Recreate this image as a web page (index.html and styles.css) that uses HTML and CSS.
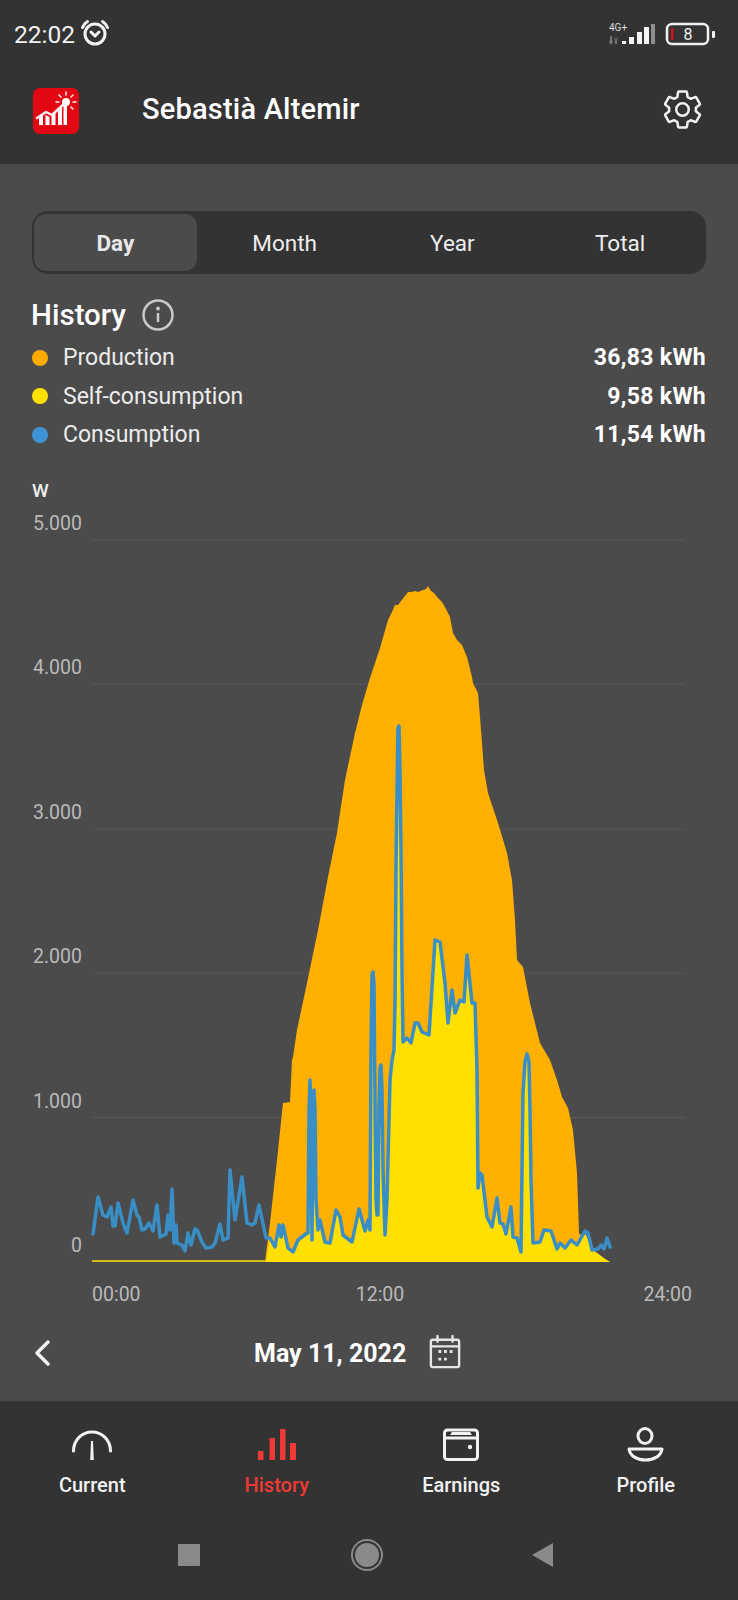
FILE: index.html
```html
<!DOCTYPE html>
<html>
  <head>
    <meta charset="utf-8">
    <title>History</title>
    <link rel="stylesheet" href="styles.css">
  </head>
  <body>
    <div class="phone">
      <header class="top">
        <div class="status">
          <span class="clock">22:02</span>
          <svg class="alarm" width="30" height="30" viewBox="0 0 30 30">
            <circle class="line" cx="15" cy="16" r="10"/>
            <path class="line" d="M11 14l4 4 4-4M2.500 9.500C3.500 7 5 5 7.500 3.500M27.500 9.500C26.500 7 25 5 22.500 3.500"/>
          </svg>
          <svg class="signal" width="122" height="30" viewBox="0 0 122 30">
            <text class="net" x="2" y="9">4G+</text>
            <path class="arrows" d="M3 14h2v8H3zM1.500 19h5L4 23zM8 14h2v8H8zM6.500 17h5L9 13z"/>
            <rect class="bar" x="15" y="19" width="4" height="3"/>
            <rect class="bar" x="22" y="15" width="5" height="7"/>
            <rect class="bar" x="30" y="10" width="5" height="12"/>
            <rect class="bar" x="37" y="5" width="5" height="17"/>
            <rect class="bar dim" x="44" y="2" width="4" height="20"/>
            <rect class="line thin" x="60" y="2" width="41" height="20" rx="5"/>
            <rect class="low" x="64" y="6" width="2.500" height="12"/>
            <text class="charge" x="81" y="17.500">8</text>
            <rect class="bar" x="105" y="9" width="3" height="7" rx="1"/>
          </svg>
        </div>
        <div class="appbar">
          <svg class="logo" width="46" height="46" viewBox="0 0 46 46">
            <rect class="logo-bg" width="46" height="46" rx="7"/>
            <path class="logo-bars" d="M6 37V30l4-3v10zM12.500 37V27l4 2v8zM18.500 37V28l4-3v12zM25 37V23l4-4v18zM30.500 37V17l3.500-1v21z"/>
            <path class="line thin" d="M4 30l9-6 6 3 13-12"/>
            <circle class="sun" cx="33" cy="14" r="4"/>
            <path class="line rays" d="M33 4v3M33 21v2M23 14h3M40 14h3M26 7l2 2M40 7l-2 2M40 21l-2-2"/>
          </svg>
          <h2 class="name">Sebastià Altemir</h2>
          <svg class="gear" width="43" height="43" viewBox="0 0 24 24">
            <path class="line gear-line" d="M19.430 12.980c.04-.32.07-.64.07-.98 0-.34-.03-.66-.07-.98l2.110-1.650c.19-.15.24-.42.12-.64l-2-3.460c-.09-.16-.26-.25-.44-.25-.06 0-.12.01-.17.03l-2.490 1c-.52-.4-1.080-.73-1.690-.98l-.38-2.650C14.460 2.180 14.250 2 14 2h-4c-.25 0-.46.18-.49.42l-.38 2.650c-.61.25-1.170.59-1.690.98l-2.490-1c-.06-.02-.12-.03-.18-.03-.17 0-.34.09-.43.25l-2 3.460c-.13.22-.07.49.12.64l2.110 1.650c-.04.32-.07.65-.07.98 0 .33.03.66.07.98l-2.110 1.650c-.19.15-.24.42-.12.64l2 3.460c.09.16.26.25.44.25.06 0 .12-.01.17-.03l2.490-1c.52.4 1.080.73 1.690.98l.38 2.650c.03.24.24.42.49.42h4c.25 0 .46-.18.49-.42l.38-2.650c.61-.25 1.170-.59 1.690-.98l2.490 1c.06.02.12.03.18.03.17 0 .34-.09.43-.25l2-3.460c.12-.22.07-.49-.12-.64l-2.110-1.650z"/>
            <circle class="line gear-line" cx="12" cy="12" r="3.500"/>
          </svg>
        </div>
      </header>

      <main class="content">
        <div class="tabs">
          <div class="tab active">Day</div>
          <div class="tab">Month</div>
          <div class="tab">Year</div>
          <div class="tab">Total</div>
        </div>

        <div class="heading">
          <h1>History</h1>
          <svg class="info" width="34" height="34" viewBox="0 0 34 34">
            <circle class="info-line" cx="17" cy="17" r="14.500"/>
            <path class="info-line" d="M17 15v9"/>
            <circle class="info-dot" cx="17" cy="10.500" r="2"/>
          </svg>
        </div>

        <div class="legend">
          <div class="row"><i class="dot orange"></i><span class="label">Production</span><b>36,83 kWh</b></div>
          <div class="row"><i class="dot yellow"></i><span class="label">Self-consumption</span><b>9,58 kWh</b></div>
          <div class="row"><i class="dot blue"></i><span class="label">Consumption</span><b>11,54 kWh</b></div>
        </div>

        <svg class="chart" width="738" height="866" viewBox="0 454 738 866">
          <text class="unit" x="32" y="497">W</text>
          <text class="tick" x="33" y="530">5.000</text>
          <text class="tick" x="33" y="674">4.000</text>
          <text class="tick" x="33" y="819">3.000</text>
          <text class="tick" x="33" y="963">2.000</text>
          <text class="tick" x="33" y="1108">1.000</text>
          <text class="tick" x="71" y="1252">0</text>

          <path class="grid" d="M92 540H685M92 684H685M92 829H685M92 973H685M92 1117.500H685"/>

          <polygon class="production" points="265,1262 270,1223 277,1160 283,1103 290,1102 292,1060 293,1057 297,1030 307,983 318,930 328,877 337,833 345,780 355,733 362,705 370,678 380,648 388,620 392,612 395,605 398,605 401,601 405,596 408,592 411,592 415,591 418,592 423,590 426,589 428,586 431,591 434,593 438,598 442,602 446,609 450,617 453,633 457,640 462,645 467,657 472,677 473,683 478,693 480,717 482,743 484,770 488,793 498,823 507,853 512,880 515,920 517,960 523,967 530,1003 540,1043 550,1060 557,1080 562,1097 568,1108 573,1130 577,1173 579,1233 585,1240 593,1250 605,1259 610,1262"/>

          <polygon class="self" points="266,1262 270,1238 275,1247 279,1225 281,1237 283,1225 288,1248 293,1252 298,1240 307,1233 308,1233 309,1110 310,1080 311,1110 312,1240 313,1120 314,1090 315,1110 316,1200 318,1230 320,1220 325,1242 330,1243 336,1210 340,1217 343,1235 352,1242 359,1209 365,1231 368,1220 370,1230 371,1050 372,975 373,972 374,985 375,1100 376,1200 377,1215 378,1215 379,1110 380,1068 381,1065 382,1090 383,1170 385,1235 387,1200 390,1080 392,1060 394,1050 395,1003 396,870 397,790 398,728 399,726 400,770 401,850 402,970 403,1042 407,1038 411,1043 415,1023 418,1023 422,1032 429,1035 435,940 440,942 445,983 448,1023 452,990 455,1013 460,1000 464,1002 467,955 472,1003 475,1003 477,1070 478,1188 480,1173 482,1175 487,1217 492,1227 497,1198 500,1223 503,1224 506,1234 511,1207 513,1237 517,1238 521,1252 522,1170 523,1093 525,1062 527,1054 529,1062 530,1110 531,1180 533,1243 540,1242 544,1230 551,1231 557,1249 560,1243 565,1248 571,1240 577,1245 585,1233 593,1250 605,1259 610,1262"/>

          <path class="zero" d="M92 1261H266"/>

          <polyline class="usage" points="93,1234 98,1197 103,1215 107,1217 111,1207 113,1226 115,1226 118,1203 123,1223 127,1233 133,1200 137,1215 139,1217 142,1230 145,1229 149,1223 153,1231 157,1205 160,1237 166,1234 168,1215 170,1230 172,1189 174,1243 176,1225 177,1243 182,1245 185,1251 188,1233 191,1245 195,1229 197,1230 202,1242 206,1248 212,1247 215,1243 220,1224 223,1240 228,1238 230,1170 235,1220 242,1177 247,1223 252,1225 255,1223 259,1205 266,1238 270,1238 275,1247 279,1225 281,1237 283,1225 288,1248 293,1252 298,1240 307,1233 308,1233 309,1110 310,1080 311,1110 312,1240 313,1120 314,1090 315,1110 316,1200 318,1230 320,1220 325,1242 330,1243 336,1210 340,1217 343,1235 352,1242 359,1209 365,1231 368,1220 370,1230 371,1050 372,975 373,972 374,985 375,1100 376,1200 377,1215 378,1215 379,1110 380,1068 381,1065 382,1090 383,1170 385,1235 387,1200 390,1080 392,1060 394,1050 395,1003 396,870 397,790 398,728 399,726 400,770 401,850 402,970 403,1042 407,1038 411,1043 415,1023 418,1023 422,1032 429,1035 435,940 440,942 445,983 448,1023 452,990 455,1013 460,1000 464,1002 467,955 472,1003 475,1003 477,1070 478,1188 480,1173 482,1175 487,1217 492,1227 497,1198 500,1223 503,1224 506,1234 511,1207 513,1237 517,1238 521,1252 522,1170 523,1093 525,1062 527,1054 529,1062 530,1110 531,1180 533,1243 540,1242 544,1230 551,1231 557,1249 560,1243 565,1248 571,1240 577,1245 585,1231 588,1233 592,1250 598,1249 601,1245 604,1249 607,1238 610,1247"/>

          <text class="tick" x="92" y="1301">00:00</text>
          <text class="tick mid" x="380" y="1301">12:00</text>
          <text class="tick end" x="692" y="1301">24:00</text>
        </svg>

        <div class="datebar">
          <svg class="back" width="20" height="28" viewBox="0 0 20 28">
            <path class="line back-line" d="M16 3L5 14l11 11"/>
          </svg>
          <span class="date">May 11, 2022</span>
          <svg class="calendar" width="32" height="34" viewBox="0 0 34 36">
            <rect class="line cal-line" x="2" y="5" width="30" height="29" rx="2"/>
            <path class="line cal-line" d="M2 12h30M9 1v6M25 1v6"/>
            <path class="cal-dots" d="M10 16h3v3h-3zM16 16h3v3h-3zM22 16h3v3h-3zM10 24h3v3h-3zM16 24h3v3h-3z"/>
          </svg>
        </div>
      </main>

      <footer class="bottom">
        <nav class="nav">
          <a class="nav-item">
            <svg width="44" height="36" viewBox="0 0 44 36">
              <path class="line" d="M3.500 24C3.500 13 12 5 22 5s18.500 8 18.500 19"/>
              <path class="needle" d="M21 14h2l.8 19h-3.600z"/>
            </svg>
            <span>Current</span>
          </a>
          <a class="nav-item current">
            <svg width="44" height="36" viewBox="0 0 44 36">
              <path class="hist-bars" d="M3 24h5.500v9H3zM14.500 11H20v22h-5.500zM25 2h5.500v31H25zM35 16h6v17h-6z"/>
            </svg>
            <span>History</span>
          </a>
          <a class="nav-item">
            <svg width="44" height="36" viewBox="0 0 44 36">
              <rect class="line" x="5.500" y="3" width="33" height="29.500" rx="3"/>
              <path class="line" d="M6 11h32"/>
              <path class="flap" d="M11 8l2-3h18l2 3z"/>
              <circle class="flap" cx="31" cy="20" r="2.200"/>
            </svg>
            <span>Earnings</span>
          </a>
          <a class="nav-item">
            <svg width="44" height="36" viewBox="0 0 44 36">
              <ellipse class="line" cx="21" cy="9" rx="7" ry="7.500"/>
              <path class="line" d="M5 22h33c-1 7-8 11-16.500 11S6 29 5 22z"/>
            </svg>
            <span>Profile</span>
          </a>
        </nav>
        <div class="sysnav">
          <i class="sys-square"></i>
          <i class="sys-circle"></i>
          <i class="sys-back"></i>
        </div>
      </footer>
    </div>
  </body>
</html>
```

FILE: styles.css
```css
body {
  margin: 0;
  padding: 0;
  font-family: Roboto, "Liberation Sans", sans-serif;
  background-color: #4b4b4b;
}
svg {
  display: block;
  flex: none;
}
h1, h2 {
  margin: 0;
}
.phone {
  width: 738px;
  height: 1600px;
  display: flex;
  flex-direction: column;
  overflow: hidden;
  color: #fff;
}

/* top */
.top {
  height: 164px;
  background-color: #333;
}
.status {
  height: 68px;
  display: flex;
  align-items: center;
  padding-left: 14px;
}
.clock {
  font-size: 24.500px;
  color: #f2f2f2;
  width: 66px;
}
.alarm {
  margin-top: -2px;
}
.signal {
  margin-left: auto;
  margin-right: 9px;
  margin-top: 5px;
}
.net {
  font-size: 10px;
  fill: #ddd;
}
.arrows {
  fill: #777;
}
.bar {
  fill: #f4f4f4;
}
.bar.dim {
  fill: #8d8d8d;
}
.low {
  fill: #d3111a;
}
.charge {
  font-size: 16px;
  fill: #f0f0f0;
  text-anchor: middle;
}
.line {
  fill: none;
  stroke: #f2f2f2;
  stroke-width: 3;
  stroke-linecap: round;
  stroke-linejoin: round;
}
.line.thin {
  stroke-width: 2.500;
}
.appbar {
  height: 82px;
  display: flex;
  align-items: center;
  padding-left: 33px;
  padding-right: 34px;
}
.logo {
  margin-top: 3px;
}
.logo-bg {
  fill: #e30613;
}
.logo-bars, .sun {
  fill: #fff;
}
.line.rays {
  stroke-width: 1.500;
}
.name {
  margin-left: 63px;
  font-size: 29px;
  font-weight: 500;
  letter-spacing: .2px;
  flex: 1;
}
.line.gear-line {
  stroke-width: 1.400;
}

/* middle */
.content {
  flex: 1;
  padding-top: 47px;
}
.tabs {
  width: 674px;
  height: 63px;
  margin-left: 32px;
  box-sizing: border-box;
  padding: 3px 2px;
  display: flex;
  background-color: #333;
  border-radius: 16px;
  font-size: 22.500px;
  color: #eee;
}
.tab {
  width: 168px;
  display: flex;
  align-items: center;
  justify-content: center;
}
.tab.active {
  width: 163px;
  margin-right: 4px;
  background-color: #4b4b4b;
  border-radius: 12px;
  font-weight: 700;
  color: #e8e8e8;
}
.heading {
  height: 38px;
  margin: 22px 32px 0 31px;
  display: flex;
  align-items: center;
  gap: 15px;
}
h1 {
  font-size: 29.500px;
  font-weight: 500;
}
.info-line {
  fill: none;
  stroke: #c9c9c9;
  stroke-width: 2.500;
}
.info-dot {
  fill: #c9c9c9;
}
.legend {
  margin: 4.500px 32px 0;
  font-size: 23px;
}
.row {
  height: 38.500px;
  display: flex;
  align-items: center;
}
.label {
  flex: 1;
  color: #ececec;
}
.row b {
  font-weight: 700;
  font-size: 23px;
  letter-spacing: .3px;
}
.dot {
  width: 16px;
  height: 16px;
  border-radius: 50%;
  margin-right: 15px;
}
.dot.orange {
  background-color: #ffab00;
}
.dot.yellow {
  background-color: #ffe000;
}
.dot.blue {
  background-color: #3f94d6;
}

/* chart */
.unit {
  font-size: 19px;
  font-weight: 500;
  fill: #eee;
}
.tick {
  font-size: 19.500px;
  fill: #b9b9b9;
}
.tick.mid {
  text-anchor: middle;
}
.tick.end {
  text-anchor: end;
}
.grid {
  fill: none;
  stroke: #585858;
  stroke-width: 1;
}
.production {
  fill: #ffb000;
}
.self {
  fill: #ffe000;
}
.zero {
  fill: none;
  stroke: #ffe000;
  stroke-width: 1.500;
}
.usage {
  fill: none;
  stroke: #3a8ec6;
  stroke-width: 3.500;
  stroke-linejoin: round;
  stroke-linecap: round;
}

/* date row */
.datebar {
  height: 81px;
  box-sizing: border-box;
  padding-left: 32px;
  padding-bottom: 15px;
  display: flex;
  align-items: center;
}
.line.back-line {
  stroke-width: 3.500;
}
.date {
  margin-left: 202px;
  font-size: 25px;
  font-weight: 700;
}
.calendar {
  margin-left: 23px;
  margin-top: -2px;
}
.line.cal-line {
  stroke: #e6e6e6;
  stroke-width: 2.500;
}
.cal-dots {
  fill: #e6e6e6;
}

/* bottom */
.bottom {
  height: 199px;
  background-color: #333;
  border-top: 1px solid #3a3a3a;
  box-sizing: border-box;
}
.nav {
  display: grid;
  grid-template-columns: repeat(4, 1fr);
  padding-top: 25px;
}
.nav-item {
  display: flex;
  flex-direction: column;
  align-items: center;
  font-size: 20px;
  font-weight: 500;
  color: #f2f2f2;
}
.nav-item span {
  margin-top: 10px;
}
.nav-item.current {
  color: #f03a35;
}
.hist-bars {
  fill: #f03a35;
}
.needle, .flap {
  fill: #f2f2f2;
}
.sysnav {
  margin-top: 46px;
  display: flex;
  align-items: center;
  padding-left: 178px;
}
.sys-square {
  width: 22px;
  height: 22px;
  background-color: #8a8a8a;
  border-radius: 1px;
}
.sys-circle {
  width: 24px;
  height: 24px;
  margin-left: 155px;
  background-color: #8a8a8a;
  border-radius: 50%;
  box-shadow: 0 0 0 2px #333, 0 0 0 4px #8a8a8a;
}
.sys-back {
  width: 0;
  height: 0;
  margin-left: 153px;
  border-top: 12px solid transparent;
  border-bottom: 12px solid transparent;
  border-right: 21px solid #8a8a8a;
}
```
